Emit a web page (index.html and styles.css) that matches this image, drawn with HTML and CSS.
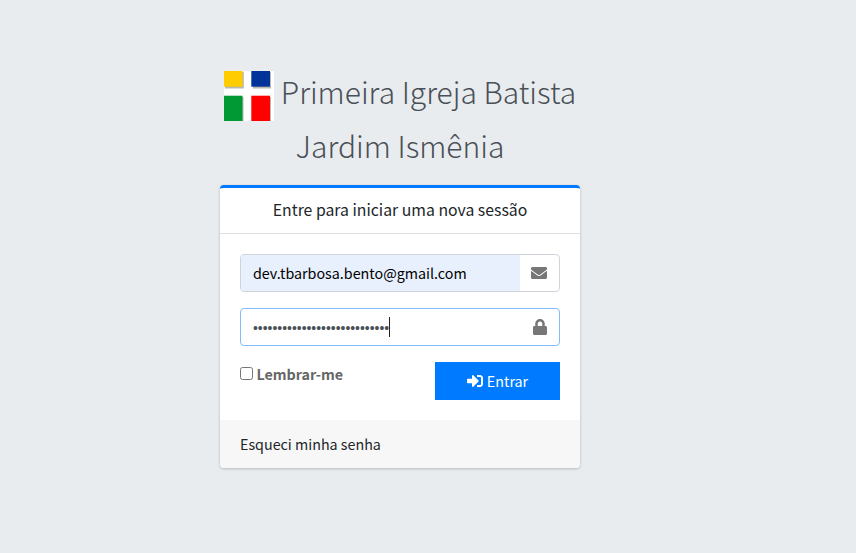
FILE: index.html
```html
<!DOCTYPE html>
<html lang="pt-BR">
<head>
<meta charset="utf-8">
<title>Entrar</title>
<link rel="stylesheet" href="styles.css">
</head>
<body>
<main class="login-box">
  <h1 class="login-logo">
    <span class="logo-line">
      <svg class="logo-mark" viewBox="0 0 50 50" aria-hidden="true">
        <path fill="#fff" d="M0 0h50v50H0z"/>
        <path fill="#b9b9b0" d="M1 1h18.800v16.500H1zM29 1h18v16.500H29zM2 26h17.500v24H2zM29 26h18v24H29z"/>
        <path fill="#fc0" d="M0 0h18.500v15.700H0z"/>
        <path fill="#039" d="M27.300 0H46v15.700H27.300z"/>
        <path fill="#093" d="M0 24.700h18.500V50H0z"/>
        <path fill="red" d="M27.300 24.700H46V50H27.300z"/>
      </svg>
      <span class="logo-text logo-first">Primeira Igreja Batista</span>
    </span>
    <span class="logo-line"><span class="logo-text logo-second">Jardim Ismênia</span></span>
  </h1>
  <section class="card">
    <header class="card-header"><span class="header-text">Entre para iniciar uma nova sessão</span></header>
    <form class="card-body">
      <div class="field">
        <div class="value filled"><span class="email">dev.tbarbosa.bento@gmail.com</span></div>
        <div class="addon">
          <svg width="16" height="16" viewBox="0 0 512 512" aria-hidden="true"><path fill="currentColor" d="M502.300 190.800c3.900-3.100 9.700-.2 9.700 4.700V400c0 26.500-21.500 48-48 48H48c-26.500 0-48-21.500-48-48V195.600c0-5 5.700-7.800 9.700-4.700 22.400 17.400 52.100 39.500 154.100 113.600 21.100 15.400 56.700 47.800 92.200 47.600 35.700.3 72-32.800 92.300-47.600 102-74.100 131.600-96.300 154-113.700zM256 320c23.200.4 56.600-29.200 73.400-41.400 132.700-96.300 142.800-104.700 173.400-128.700 5.800-4.500 9.200-11.500 9.200-18.900v-19c0-26.500-21.500-48-48-48H48c-26.500 0-48 21.500-48 48v19c0 7.400 3.400 14.300 9.200 18.900 30.600 23.900 40.700 32.400 173.400 128.700 16.800 12.200 50.200 41.800 73.400 41.400z"/></svg>
        </div>
      </div>
      <div class="field focused">
        <div class="value"><span class="dots">••••••••••••••••••••••••••••</span><i class="caret"></i></div>
        <div class="addon">
          <svg width="14" height="16" viewBox="0 0 448 512" aria-hidden="true"><path fill="currentColor" d="M400 224h-24v-72C376 68.200 307.800 0 224 0S72 68.200 72 152v72H48c-26.500 0-48 21.500-48 48v192c0 26.500 21.500 48 48 48h352c26.500 0 48-21.500 48-48V272c0-26.500-21.500-48-48-48zm-104 0H152v-72c0-39.700 32.300-72 72-72s72 32.300 72 72v72z"/></svg>
        </div>
      </div>
      <div class="actions">
        <label class="remember"><input type="checkbox"><span>Lembrar-me</span></label>
        <button class="submit" type="button">
          <svg width="16" height="16" viewBox="0 0 512 512" aria-hidden="true"><path fill="currentColor" d="M416 448h-84c-6.600 0-12-5.400-12-12v-40c0-6.600 5.400-12 12-12h84c17.700 0 32-14.300 32-32V160c0-17.700-14.300-32-32-32h-84c-6.600 0-12-5.400-12-12V76c0-6.600 5.400-12 12-12h84c53 0 96 43 96 96v192c0 53-43 96-96 96zm-47-209L201 71c-15-15-41-4.500-41 17v96H24c-13.300 0-24 10.700-24 24v96c0 13.300 10.700 24 24 24h136v96c0 21.500 26 32 41 17l168-168c9.300-9.400 9.300-24.600 0-34z"/></svg>
          <span>Entrar</span>
        </button>
      </div>
    </form>
    <footer class="card-footer"><a class="forgot">Esqueci minha senha</a></footer>
  </section>
</main>
</body>
</html>
```
FILE: styles.css
```css
* { box-sizing: border-box; }
body {
  margin: 0;
  min-height: 553px;
  padding: 66px 0 0 220px;
  background: #e9ecef;
  color: #212529;
  font-family: "Noto Sans CJK JP", "Noto Sans", sans-serif;
  font-size: 14.3px;
  line-height: 24px;
  white-space: nowrap;
}
.login-box { width: 360px; }
.login-logo {
  margin: 0;
  height: 119px;
  color: #495057;
  font-size: 30px;
  font-weight: 300;
}
.logo-line {
  display: flex;
  justify-content: center;
  height: 54px;
  line-height: 50px;
}
.logo-mark { width: 50px; height: 50px; margin: 5px 7px 0 0; }
.card {
  height: 283px;
  border-top: 3px solid #007bff;
  border-radius: 4px;
  background: #fff;
  box-shadow: 0 0 1px rgba(0,0,0,.125), 0 1px 3px rgba(0,0,0,.2);
  overflow: hidden;
}
.card-header {
  height: 46px;
  border-bottom: 1px solid #dfdfdf;
  line-height: 43px;
  text-align: center;
  font-size: 15.8px;
}
.card-body { height: 186px; padding: 20px; }
.field {
  display: flex;
  height: 38px;
  margin-bottom: 16px;
  border: 1px solid #ced4da;
  border-radius: 4px;
  overflow: hidden;
}
.focused { border-color: #80bdff; }
.value {
  display: flex;
  align-items: center;
  flex: 1;
  padding-left: 12px;
}
.filled { background: #e8f0fe; color: #000; }
.addon {
  display: flex;
  align-items: center;
  justify-content: flex-end;
  width: 39px;
  padding-right: 12px;
  color: #777;
}
.dots {
  padding-top: 2px;
  color: #495057;
  font-family: "Liberation Sans", sans-serif;
  font-size: 13.900px;
}
.caret { width: 1px; height: 20px; background: #222; }
.actions { display: flex; justify-content: space-between; }
.remember {
  display: flex;
  height: 24px;
  color: #666;
  font-weight: 700;
}
.remember input { width: 13px; height: 13px; margin: 5px 3.400px 0 0; }
.submit {
  display: flex;
  align-items: center;
  justify-content: center;
  gap: 4px;
  width: 125px;
  height: 38px;
  padding: 0;
  border: 0;
  background: #007bff;
  color: #fff;
  font: inherit;
}
.card-footer {
  height: 48px;
  padding: 12px 20px;
  background: #f7f7f7;
}
```
